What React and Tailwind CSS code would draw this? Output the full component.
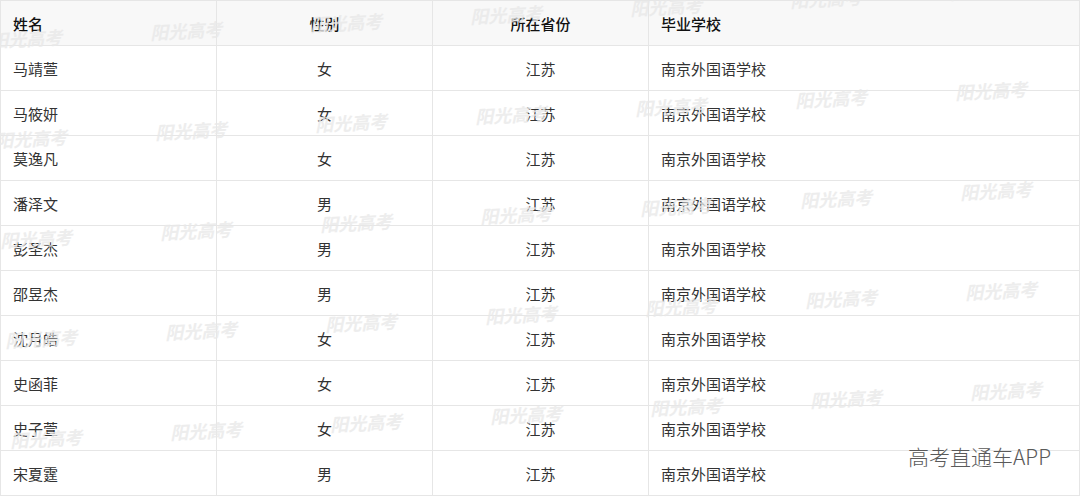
import React from 'react';

const rows = [
  ['马靖萱', '女'],
  ['马筱妍', '女'],
  ['莫逸凡', '女'],
  ['潘泽文', '男'],
  ['彭圣杰', '男'],
  ['邵昱杰', '男'],
  ['沈月皓', '女'],
  ['史函菲', '女'],
  ['史子萱', '女'],
  ['宋夏霆', '男'],
];

const FONT = { fontFamily: '"Noto Sans CJK SC", "Noto Sans", sans-serif' };

// watermark grid: tilted lattice of "阳光高考"
const marks = [];
for (let r = -1; r <= 3; r++) {
  for (let k = 0; k <= 6; k++) {
    marks.push({ x: -5 + 160 * k + 5 * r, y: 138 + 100 * r - 8 * k });
  }
}

const Cell = ({ children, align = 'left', head = false }) => (
  <td
    className={`h-[45px] border border-[#e6e6e6] px-3 text-[15px] leading-none ${
      align === 'center' ? 'text-center' : 'text-left'
    } ${head ? 'font-medium text-[#111]' : 'text-[#333]'}`}
  >
    {children}
  </td>
);

export default function App() {
  return (
    <div className="relative w-[1080px] h-[497px] overflow-hidden bg-white" style={FONT}>
      <table className="w-[1080px] table-fixed border-collapse">
        <colgroup>
          <col className="w-[216px]" />
          <col className="w-[216px]" />
          <col className="w-[216px]" />
          <col />
        </colgroup>
        <thead>
          <tr className="bg-[#f8f8f8]">
            <Cell head>姓名</Cell>
            <Cell head align="center">性别</Cell>
            <Cell head align="center">所在省份</Cell>
            <Cell head>毕业学校</Cell>
          </tr>
        </thead>
        <tbody>
          {rows.map(([name, sex]) => (
            <tr key={name}>
              <Cell>{name}</Cell>
              <Cell align="center">{sex}</Cell>
              <Cell align="center">江苏</Cell>
              <Cell>南京外国语学校</Cell>
            </tr>
          ))}
        </tbody>
      </table>

      {/* watermark overlay */}
      <div className="pointer-events-none absolute inset-0">
        {marks.map((m, i) => (
          <span
            key={i}
            className="absolute -translate-y-1/2 -rotate-3 whitespace-nowrap text-[18px] font-bold italic leading-none text-[#e9e9e9] opacity-80"
            style={{ left: m.x, top: m.y, fontFamily: '"Noto Sans CJK SC", serif' }}
          >
            阳光高考
          </span>
        ))}
      </div>

      <div className="pointer-events-none absolute right-[29px] top-[446px] text-[21px] font-light leading-none text-[#5a5a5a]">
        高考直通车APP
      </div>
    </div>
  );
}
